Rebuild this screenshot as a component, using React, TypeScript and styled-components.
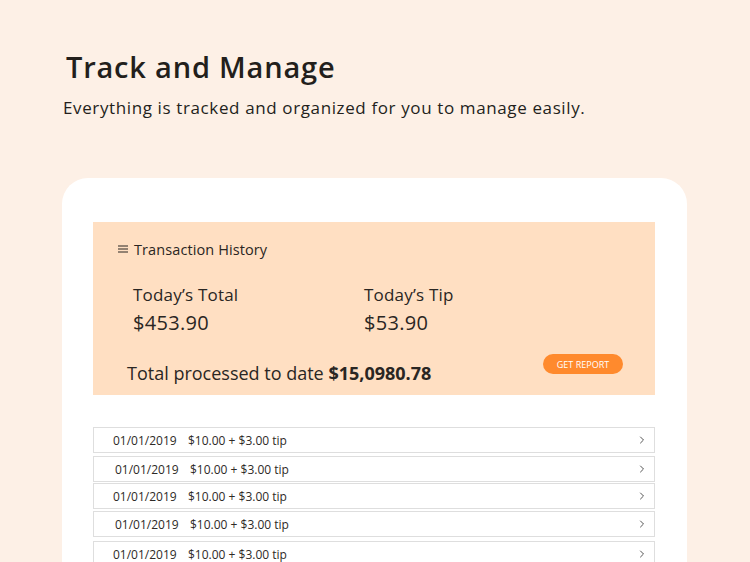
import React from "react";
import styled, { createGlobalStyle } from "styled-components";

const Global = createGlobalStyle`
  html, body { margin: 0; padding: 0; background: #fdf0e6; }
  body { font-family: "Open Sans", "Noto Sans", sans-serif; color: #222; overflow: hidden; }
  #root { width: 750px; height: 562px; overflow: hidden; }
`;

const Page = styled.div`
  width: 750px;
  height: 562px;
  background: #fdf0e6;
  display: flex;
  flex-direction: column;
  overflow: hidden;
`;

const Header = styled.header`
  padding: 48px 0 0 63px;
  display: flex;
  flex-direction: column;
`;

const Title = styled.h1`
  margin: 0 0 0 3px;
  font-size: 29px;
  font-weight: 600;
  letter-spacing: 0.8px;
  line-height: 38px;
  color: #231f1c;
`;

const Subtitle = styled.p`
  margin: 10px 0 0;
  font-size: 17px;
  line-height: 24px;
  letter-spacing: 0.62px;
  color: #231f1c;
`;

const Card = styled.section`
  margin: 58px 0 0 62px;
  width: 625px;
  flex: 1;
  background: #ffffff;
  border-radius: 26px 26px 0 0;
  padding: 44px 32px 0 31px;
  box-sizing: border-box;
  display: flex;
  flex-direction: column;
`;

const Summary = styled.div`
  background: #ffdfc2;
  height: 173px;
  padding: 18px 32px 0 24px;
  box-sizing: border-box;
  display: flex;
  flex-direction: column;
`;

const PanelTitle = styled.div`
  display: flex;
  align-items: center;
  gap: 5px;
  font-size: 14.5px;
  letter-spacing: 0.1px;
  color: #2a2623;
  height: 18px;
`;

const Stats = styled.div`
  display: grid;
  grid-template-columns: 231px 1fr;
  padding: 27px 0 0 16px;
`;

const Stat = styled.div`
  display: flex;
  flex-direction: column;
`;

const StatLabel = styled.div`
  font-size: 17px;
  line-height: 20px;
  letter-spacing: 0.2px;
  color: #2a2623;
`;

const StatValue = styled.div`
  font-size: 20px;
  line-height: 24px;
  margin-top: 6px;
  letter-spacing: 0.3px;
  color: #2a2623;
`;

const Footer = styled.div`
  display: flex;
  justify-content: space-between;
  align-items: flex-start;
  padding: 19px 0 0 10px;
`;

const Processed = styled.div`
  font-size: 18px;
  line-height: 22px;
  margin-top: 8px;
  color: #2a2623;
  b { font-weight: 700; }
`;

const ReportButton = styled.button`
  border: none;
  background: #ff8a2d;
  color: #fff;
  font-family: "Open Sans", sans-serif;
  font-size: 9px;
  font-weight: 500;
  height: 20px;
  width: 80px;
  border-radius: 10px;
  padding: 0;
  cursor: pointer;
`;

const List = styled.div`
  margin-top: 32px;
  display: flex;
  flex-direction: column;
`;

const Row = styled.div<{ $shift: number; $gap: number }>`
  height: 26px;
  margin-top: ${(p) => p.$gap}px;
  border: 1px solid #dedede;
  box-sizing: border-box;
  display: flex;
  align-items: center;
  padding: 0 8px 0 ${(p) => 19 + p.$shift}px;
  font-size: 12px;
  color: #2e2a27;
`;

const Date = styled.span`
  width: 75px;
`;

const Amount = styled.span`
  flex: 1;
`;

const Chevron = () => (
  <svg width="8" height="10" viewBox="0 0 8 10" fill="none">
    <path d="M2.5 2 L5.5 5 L2.5 8" stroke="#555" strokeWidth="1" strokeLinecap="round" />
  </svg>
);

const MenuIcon = () => (
  <svg width="12" height="10" viewBox="0 0 12 10">
    <path d="M1 2h10M1 5h10M1 8h10" stroke="#2a2623" strokeWidth="1.1" />
  </svg>
);

const rows = [
  { shift: 0, gap: 0 },
  { shift: 2, gap: 3 },
  { shift: 0, gap: 1 },
  { shift: 2, gap: 2 },
  { shift: 0, gap: 4 },
];

export default function App() {
  return (
    <Page>
      <Global />
      <Header>
        <Title>Track and Manage</Title>
        <Subtitle>Everything is tracked and organized for you to manage easily.</Subtitle>
      </Header>
      <Card>
        <Summary>
          <PanelTitle>
            <MenuIcon />
            Transaction History
          </PanelTitle>
          <Stats>
            <Stat>
              <StatLabel>Today’s Total</StatLabel>
              <StatValue>$453.90</StatValue>
            </Stat>
            <Stat>
              <StatLabel>Today’s Tip</StatLabel>
              <StatValue>$53.90</StatValue>
            </Stat>
          </Stats>
          <Footer>
            <Processed>
              Total processed to date <b>$15,0980.78</b>
            </Processed>
            <ReportButton>GET REPORT</ReportButton>
          </Footer>
        </Summary>
        <List>
          {rows.map((r, i) => (
            <Row key={i} $shift={r.shift} $gap={r.gap}>
              <Date>01/01/2019</Date>
              <Amount>$10.00 + $3.00 tip</Amount>
              <Chevron />
            </Row>
          ))}
        </List>
      </Card>
    </Page>
  );
}
